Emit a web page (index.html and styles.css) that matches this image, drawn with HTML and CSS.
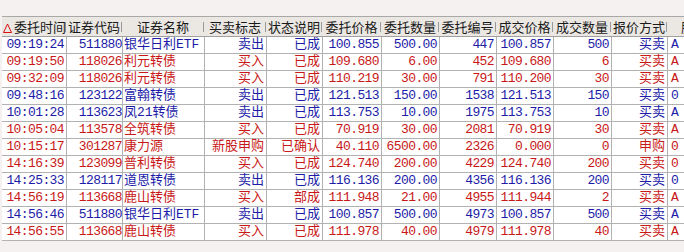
FILE: index.html
```html
<!DOCTYPE html>
<html lang="zh-CN">
<head>
<meta charset="utf-8">
<title>委托查询</title>
<link rel="stylesheet" href="styles.css">
</head>
<body>
<div class="top"></div>
<div class="grid">
  <div class="row head">
    <div class="h first"><svg class="sort" width="9" height="10" viewBox="0 0 9 10"><polygon points="4.5,1 8.5,9.5 0.5,9.5" fill="none" stroke="#d81010" stroke-width="1"/></svg>委托时间</div>
    <div class="h">证券代码</div>
    <div class="h">证券名称</div>
    <div class="h">买卖标志</div>
    <div class="h">状态说明</div>
    <div class="h">委托价格</div>
    <div class="h">委托数量</div>
    <div class="h">委托编号</div>
    <div class="h">成交价格</div>
    <div class="h">成交数量</div>
    <div class="h">报价方式</div>
    <div class="h">股东代码</div>
  </div>

  <div class="row sell"><div class="n">09:19:24</div><div class="n code">511880</div><div class="c name">银华日利ETF</div><div class="c">卖出</div><div class="c">已成</div><div class="n">100.855</div><div class="n">500.00</div><div class="n">447</div><div class="n">100.857</div><div class="n">500</div><div class="c">买卖</div><div class="c last">A</div></div>
  <div class="row buy"><div class="n">09:19:50</div><div class="n code">118026</div><div class="c name">利元转债</div><div class="c">买入</div><div class="c">已成</div><div class="n">109.680</div><div class="n">6.00</div><div class="n">452</div><div class="n">109.680</div><div class="n">6</div><div class="c">买卖</div><div class="c last">A</div></div>
  <div class="row buy"><div class="n">09:32:09</div><div class="n code">118026</div><div class="c name">利元转债</div><div class="c">买入</div><div class="c">已成</div><div class="n">110.219</div><div class="n">30.00</div><div class="n">791</div><div class="n">110.200</div><div class="n">30</div><div class="c">买卖</div><div class="c last">A</div></div>
  <div class="row sell"><div class="n">09:48:16</div><div class="n code">123122</div><div class="c name">富翰转债</div><div class="c">卖出</div><div class="c">已成</div><div class="n">121.513</div><div class="n">150.00</div><div class="n">1538</div><div class="n">121.513</div><div class="n">150</div><div class="c">买卖</div><div class="c last">0</div></div>
  <div class="row sell"><div class="n">10:01:28</div><div class="n code">113623</div><div class="c name">凤21转债</div><div class="c">卖出</div><div class="c">已成</div><div class="n">113.753</div><div class="n">10.00</div><div class="n">1975</div><div class="n">113.753</div><div class="n">10</div><div class="c">买卖</div><div class="c last">A</div></div>
  <div class="row buy"><div class="n">10:05:04</div><div class="n code">113578</div><div class="c name">全筑转债</div><div class="c">买入</div><div class="c">已成</div><div class="n">70.919</div><div class="n">30.00</div><div class="n">2081</div><div class="n">70.919</div><div class="n">30</div><div class="c">买卖</div><div class="c last">A</div></div>
  <div class="row buy"><div class="n">10:15:17</div><div class="n code">301287</div><div class="c name">康力源</div><div class="c">新股申购</div><div class="c">已确认</div><div class="n">40.110</div><div class="n">6500.00</div><div class="n">2326</div><div class="n">0.000</div><div class="n">0</div><div class="c">申购</div><div class="c last">0</div></div>
  <div class="row buy"><div class="n">14:16:39</div><div class="n code">123099</div><div class="c name">普利转债</div><div class="c">买入</div><div class="c">已成</div><div class="n">124.740</div><div class="n">200.00</div><div class="n">4229</div><div class="n">124.740</div><div class="n">200</div><div class="c">买卖</div><div class="c last">0</div></div>
  <div class="row sell"><div class="n">14:25:33</div><div class="n code">128117</div><div class="c name">道恩转债</div><div class="c">卖出</div><div class="c">已成</div><div class="n">116.136</div><div class="n">200.00</div><div class="n">4356</div><div class="n">116.136</div><div class="n">200</div><div class="c">买卖</div><div class="c last">0</div></div>
  <div class="row buy"><div class="n">14:56:19</div><div class="n code">113668</div><div class="c name">鹿山转债</div><div class="c">买入</div><div class="c">部成</div><div class="n">111.948</div><div class="n">21.00</div><div class="n">4955</div><div class="n">111.944</div><div class="n">2</div><div class="c">买卖</div><div class="c last">A</div></div>
  <div class="row sell"><div class="n">14:56:46</div><div class="n code">511880</div><div class="c name">银华日利ETF</div><div class="c">卖出</div><div class="c">已成</div><div class="n">100.857</div><div class="n">500.00</div><div class="n">4973</div><div class="n">100.857</div><div class="n">500</div><div class="c">买卖</div><div class="c last">A</div></div>
  <div class="row buy"><div class="n">14:56:55</div><div class="n code">113668</div><div class="c name">鹿山转债</div><div class="c">买入</div><div class="c">已成</div><div class="n">111.978</div><div class="n">40.00</div><div class="n">4979</div><div class="n">111.978</div><div class="n">40</div><div class="c">买卖</div><div class="c last">A</div></div>
</div>
</body>
</html>
```

FILE: styles.css
```css
html, body {
  margin: 0;
  padding: 0;
}
body {
  width: 684px;
  height: 252px;
  overflow: hidden;
  background: #f5f1f1;
  font-family: "Noto Sans CJK SC", sans-serif;
}
.top {
  height: 16px;
}
.grid {
  --cols: 65px 56px 82px 62px 56px 59px 58px 57px 57px 58px 56px 80px;
  margin-left: 2px;
  width: 746px;
  background: #ffffff;
}
.row {
  display: grid;
  grid-template-columns: var(--cols);
  height: 17px;
}
.row > div {
  box-sizing: border-box;
  border-right: 1px solid #b2b2b2;
  border-bottom: 1px solid #b2b2b2;
  line-height: 16px;
  white-space: nowrap;
  overflow: hidden;
  text-align: right;
  padding-right: 2px;
}
.head {
  height: 21px;
  background: #ebe8e4;
  border-top: 1px solid #a8a8a8;
  border-bottom: 1px solid #a0a0a0;
  box-sizing: border-box;
}
.row.head > .h {
  border: 0;
  height: 19px;
  line-height: 19px;
  text-align: center;
  padding: 0 2px 0 0;
  font-size: 13px;
  color: #1a1a1a;
  background: linear-gradient(#9a9a9a, #9a9a9a) no-repeat right 1px center / 1px 10px;
}
.row.head > .first {
  text-align: left;
  padding-left: 1px;
}
.sort {
  vertical-align: -1px;
  margin-right: 2px;
}
.n {
  font-family: "Liberation Mono", monospace;
  font-size: 13px;
  letter-spacing: -0.6px;
}
.c {
  font-family: "Liberation Mono", "Noto Sans CJK SC", sans-serif;
  font-size: 13px;
}
.row > .code {
  padding-right: 0;
}
.row > .name {
  text-align: left;
  padding-left: 1px;
  padding-right: 0;
}
.row > .last {
  text-align: left;
  padding-left: 3px;
}
.sell {
  color: #1c1ca8;
}
.buy {
  color: #c81818;
}
```
